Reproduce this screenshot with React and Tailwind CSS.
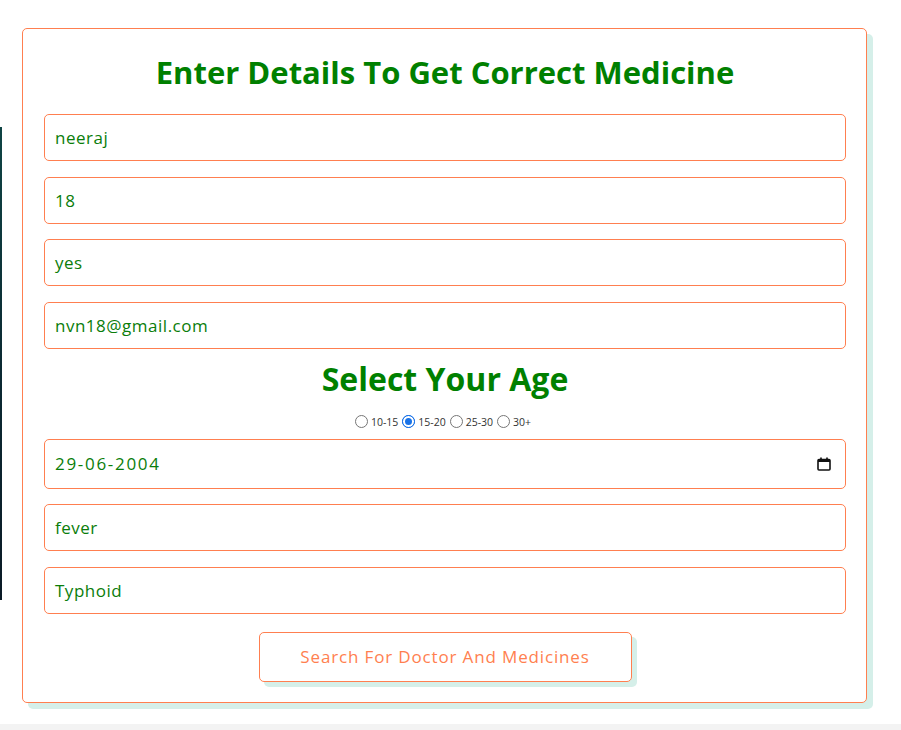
import React from "react";

const font = { fontFamily: '"Open Sans", "Liberation Sans", sans-serif' };

function Field({ value, mt }) {
  return (
    <div className={`${mt} h-[47px] w-full rounded-[5px] border border-[#ff7f50] bg-white px-[10px] flex items-center`}>
      <span className="text-[17px] tracking-[0.03em] text-[#0a7d0a]">{value}</span>
    </div>
  );
}

function Radio({ checked, label }) {
  return (
    <span className="flex items-center">
      <span
        className={`inline-block h-[13px] w-[13px] rounded-full border ${checked ? "border-[#1a73e8] bg-white" : "border-[#767676] bg-white"} flex items-center justify-center`}
      >
        {checked ? <span className="block h-[11px] w-[11px] rounded-full border-[2.5px] border-white bg-[#1a73e8] outline outline-1 outline-[#1a73e8]" /> : null}
      </span>
      <span className="ml-[3px] mr-[4px] mt-[4px] text-[10.5px] text-[#333]">{label}</span>
    </span>
  );
}

export default function App() {
  return (
    <div className="w-[901px] h-[730px] bg-white overflow-hidden flex flex-col" style={font}>
      <div className="flex h-[724px]">
        <div className="mt-[127px] h-[473px] w-[2px] bg-gradient-to-b from-[#0f4444] via-[#0b2a33] to-[#0a1a26]" />
        <div className="ml-[20px] mt-[28px] self-start w-[845px] rounded-[5px] border border-[#ff7f50] bg-white shadow-[6px_6px_0_#d5efe9] pl-[21px] pr-[20px] pb-[20px]">
          <h1 className="mt-[23px] h-[40px] leading-[40px] text-center text-[31px] font-bold text-[#008000]">
            Enter Details To Get Correct Medicine
          </h1>
          <Field mt="mt-[22px]" value="neeraj" />
          <Field mt="mt-[16px]" value="18" />
          <Field mt="mt-[15px]" value="yes" />
          <Field mt="mt-[16px]" value="nvn18@gmail.com" />
          <h2 className="mt-[10px] h-[40px] leading-[40px] text-center text-[32px] font-bold text-[#008000]">
            Select Your Age
          </h2>
          <div className="mt-[12px] h-[20px] mb-[8px] flex items-center justify-center">
            <Radio label="10-15" />
            <Radio checked label="15-20" />
            <Radio label="25-30" />
            <Radio label="30+" />
          </div>
          <div className="h-[50px] w-full rounded-[5px] border border-[#ff7f50] bg-white pl-[10px] pr-[14px] flex items-center justify-between">
            <span className="text-[17px] tracking-[0.1em] text-[#0a7d0a]">29-06-2004</span>
            <svg width="14" height="14" viewBox="0 0 14 14" fill="none">
              <rect x="1" y="2.5" width="12" height="10.5" rx="1" stroke="#111" strokeWidth="1.6" />
              <rect x="1" y="2.5" width="12" height="2.5" fill="#111" />
              <rect x="3.2" y="0.5" width="1.6" height="2.5" fill="#111" />
              <rect x="9.2" y="0.5" width="1.6" height="2.5" fill="#111" />
            </svg>
          </div>
          <Field mt="mt-[15px]" value="fever" />
          <Field mt="mt-[16px]" value="Typhoid" />
          <div className="mt-[18px] flex justify-center">
            <div className="h-[50px] w-[373px] rounded-[5px] border border-[#ff7f50] bg-white shadow-[5px_5px_0_#d5efe9] flex items-center justify-center">
              <span className="text-[17px] tracking-[0.05em] text-[#ff7f50]">Search For Doctor And Medicines</span>
            </div>
          </div>
        </div>
      </div>
      <div className="h-[6px] bg-[#f3f3f3]" />
    </div>
  );
}
